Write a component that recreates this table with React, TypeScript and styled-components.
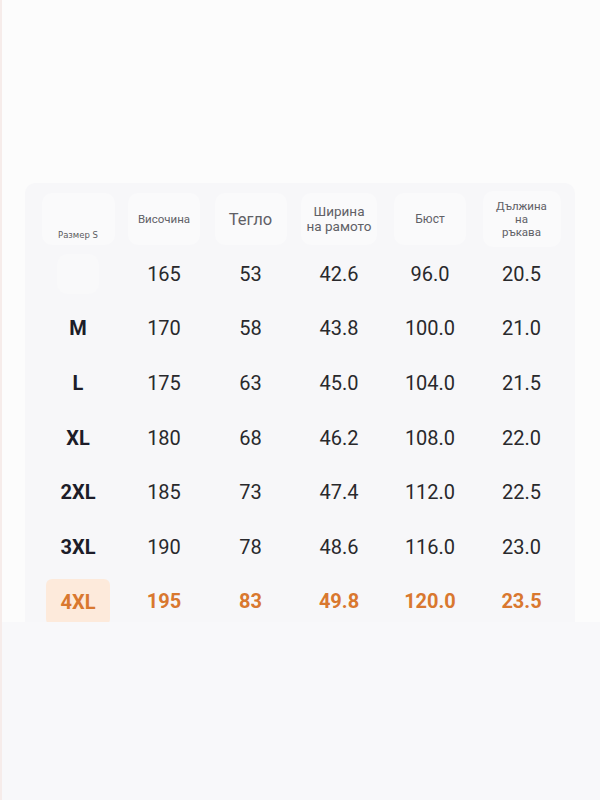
import React from 'react';
import styled, { createGlobalStyle } from 'styled-components';

const GlobalStyle = createGlobalStyle`
  html, body {
    margin: 0;
    padding: 0;
    background: #fcfcfc;
  }
  body {
    font-family: Roboto, "Liberation Sans", sans-serif;
  }
`;

const Page = styled.div`
  width: 600px;
  height: 800px;
  display: flex;
  flex-direction: column;
  background: #fcfcfc;
  border-left: 2px solid #f6ecea;
  box-sizing: border-box;
  overflow: hidden;
`;

const TopSpace = styled.div`
  height: 183px;
  flex-shrink: 0;
`;

const Card = styled.div`
  margin: 0 25px 0 23px;
  height: 439px;
  flex-shrink: 0;
  overflow: hidden;
  background: #f7f7f9;
  border-radius: 10px 10px 0 0;
  padding: 9px 6px 0 10px;
  box-sizing: border-box;
`;

const Grid = styled.div`
  display: grid;
  grid-template-columns: 86px 86px 87px 90px 92px 91px;
  grid-auto-rows: 54.6px;
`;

const Cell = styled.div`
  display: flex;
  align-items: center;
  justify-content: center;
`;

const HeadBox = styled.div<{ $w?: number; $align?: string }>`
  width: ${(p) => p.$w ?? 72}px;
  height: 52px;
  border-radius: 10px;
  background: #fafafb;
  display: flex;
  flex-direction: column;
  align-items: center;
  justify-content: ${(p) => p.$align ?? 'center'};
  text-align: center;
  color: #606066;
  box-sizing: border-box;
`;

const HeadText = styled.span<{ $size: number; $lh?: number }>`
  font-size: ${(p) => p.$size}px;
  line-height: ${(p) => p.$lh ?? 15}px;
`;

const SizeHead = styled.span`
  font-family: "DejaVu Sans", sans-serif;
  font-size: 8.5px;
  color: #5a5a60;
  padding-bottom: 5px;
`;

const GhostBox = styled.div`
  width: 42px;
  height: 40px;
  border-radius: 10px;
  background: #f9f9fa;
`;

const SizeLabel = styled.div<{ $hl?: boolean }>`
  width: 64px;
  height: 46px;
  border-radius: 6px;
  display: flex;
  align-items: center;
  justify-content: center;
  font-size: 20px;
  font-weight: 700;
  color: ${(p) => (p.$hl ? '#d9782f' : '#1d1d29')};
  background: ${(p) => (p.$hl ? '#fdeadb' : 'transparent')};
  margin-top: ${(p) => (p.$hl ? '2px' : '0')};
`;

const Value = styled.span<{ $hl?: boolean }>`
  font-size: 20px;
  font-weight: ${(p) => (p.$hl ? 700 : 400)};
  color: ${(p) => (p.$hl ? '#d9782f' : '#29292c')};
`;

const Bottom = styled.div`
  flex: 1;
  background: #f8f8fa;
`;

const rows = [
  { size: '', v: ['165', '53', '42.6', '96.0', '20.5'] },
  { size: 'M', v: ['170', '58', '43.8', '100.0', '21.0'] },
  { size: 'L', v: ['175', '63', '45.0', '104.0', '21.5'] },
  { size: 'XL', v: ['180', '68', '46.2', '108.0', '22.0'] },
  { size: '2XL', v: ['185', '73', '47.4', '112.0', '22.5'] },
  { size: '3XL', v: ['190', '78', '48.6', '116.0', '23.0'] },
  { size: '4XL', v: ['195', '83', '49.8', '120.0', '23.5'], hl: true },
];

const App: React.FC = () => {
  return (
    <>
      <GlobalStyle />
      <Page>
        <TopSpace />
        <Card>
          <Grid>
            <Cell>
              <HeadBox $w={73} $align="flex-end">
                <SizeHead>Размер S</SizeHead>
              </HeadBox>
            </Cell>
            <Cell>
              <HeadBox>
                <HeadText $size={11.5}>Височина</HeadText>
              </HeadBox>
            </Cell>
            <Cell>
              <HeadBox>
                <HeadText $size={16.5}>Тегло</HeadText>
              </HeadBox>
            </Cell>
            <Cell>
              <HeadBox $w={76}>
                <HeadText $size={13.5} $lh={15}>
                  Ширина
                  <br />
                  на рамото
                </HeadText>
              </HeadBox>
            </Cell>
            <Cell>
              <HeadBox>
                <HeadText $size={12}>Бюст</HeadText>
              </HeadBox>
            </Cell>
            <Cell>
              <HeadBox $w={78} style={{ height: 56 }}>
                <HeadText $size={11.5} $lh={13}>
                  Дължина
                  <br />
                  на
                  <br />
                  ръкава
                </HeadText>
              </HeadBox>
            </Cell>
            {rows.map((r, i) => (
              <React.Fragment key={i}>
                <Cell>
                  {r.size ? <SizeLabel $hl={r.hl}>{r.size}</SizeLabel> : <GhostBox />}
                </Cell>
                {r.v.map((v, j) => (
                  <Cell key={j}>
                    <Value $hl={r.hl}>{v}</Value>
                  </Cell>
                ))}
              </React.Fragment>
            ))}
          </Grid>
        </Card>
        <Bottom />
      </Page>
    </>
  );
};

export default App;
